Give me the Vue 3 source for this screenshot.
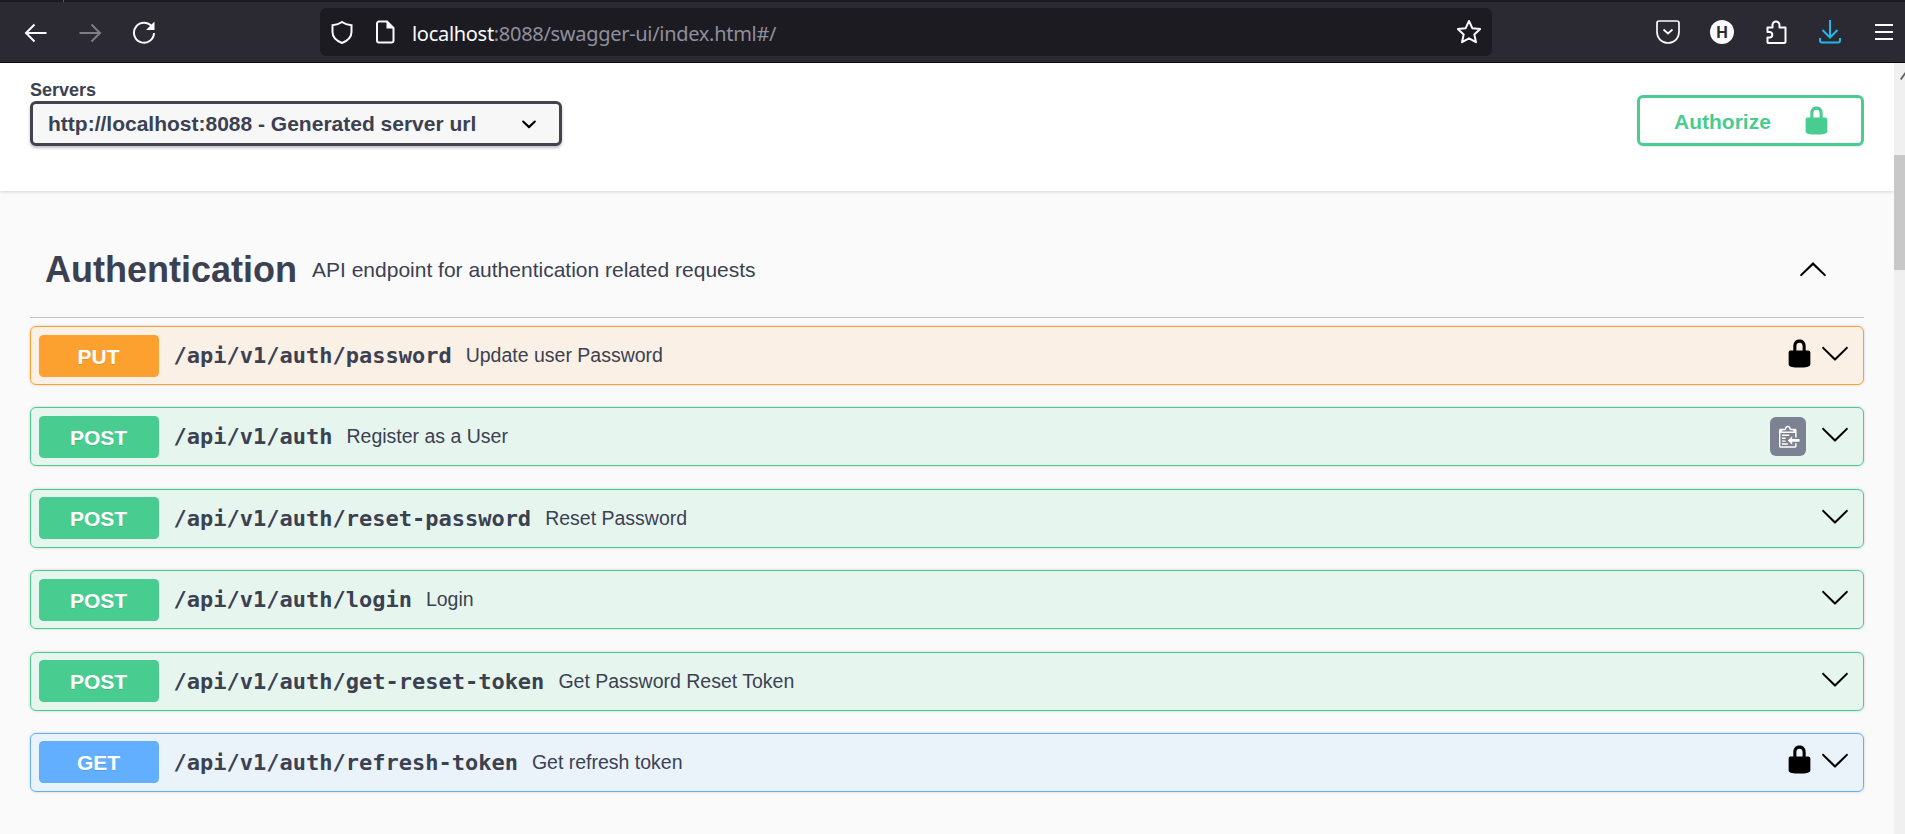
<script setup>
const lock = "M15.8 8H14V5.6C14 2.703 12.665 1 10 1 7.334 1 6 2.703 6 5.6V8H4c-.553 0-1 .646-1 1.199V17c0 .549.428 1.139.951 1.307l1.197.387C5.672 18.861 6.55 19 7.1 19h5.8c.549 0 1.428-.139 1.951-.307l1.196-.387c.524-.167.953-.757.953-1.306V9.199C17 8.646 16.352 8 15.8 8zM12 8H8V5.199C8 3.754 8.797 3 10 3s2 .754 2 2.199V8z"
const arrow = "M17.418 6.109c.272-.268.709-.268.979 0s.271.701 0 .969l-7.908 7.83c-.27.268-.707.268-.979 0l-7.908-7.83c-.27-.268-.27-.701 0-.969.271-.268.709-.268.979 0L10 13.25l7.418-7.141z"
const rows = [
  { method: 'PUT', path: '/api/v1/auth/password', desc: 'Update user Password', extra: 'lock' },
  { method: 'POST', path: '/api/v1/auth', desc: 'Register as a User', extra: 'copy' },
  { method: 'POST', path: '/api/v1/auth/reset-password', desc: 'Reset Password' },
  { method: 'POST', path: '/api/v1/auth/login', desc: 'Login' },
  { method: 'POST', path: '/api/v1/auth/get-reset-token', desc: 'Get Password Reset Token' },
  { method: 'GET', path: '/api/v1/auth/refresh-token', desc: 'Get refresh token', extra: 'lock' }
]
</script>

<template>
  <div class="window">
    <div class="tabstrip"><i class="tabsep"></i></div>
    <header class="toolbar">
      <div class="nav">
        <svg class="ico" viewBox="0 0 24 24"><path d="M22.5 13H2.5M10.5 4.5L2 13l8.500 8.500" /></svg>
        <svg class="ico dim" viewBox="0 0 24 24"><path d="M1.500 13H21.500M13.500 4.500L22 13l-8.500 8.500" /></svg>
        <svg class="ico" viewBox="0 0 24 24"><path d="M20.500 7.500A10 10 0 1 0 22 13" /><path class="solid" d="M22.500 1.500v8.500h-8.500z" /></svg>
      </div>
      <div class="urlbar">
        <svg class="ico shield" viewBox="0 0 24 24"><path d="M12 2C9 4.200 6 4.800 2.500 5.200V12c0 5 4 8.800 9.500 11 5.500-2.200 9.500-6 9.500-11V5.200C18 4.800 15 4.200 12 2z" /></svg>
        <svg class="ico page" viewBox="0 0 24 24"><path d="M4 3.500A2 2 0 0 1 6 1.500h8l6.500 6.500v12.500a2 2 0 0 1-2 2H6a2 2 0 0 1-2-2z" /><path class="solid" d="M13.500 1.500l7 7h-7z" /></svg>
        <div class="url">localhost<span>:8088/swagger-ui/index.html#/</span></div>
        <svg class="ico star" viewBox="0 0 24 24"><path stroke-linejoin="round" d="M12 1l3.300 7.200 7.900.9-5.900 5.300 1.700 7.800L12 18.300l-7 3.900 1.700-7.800L.8 9.100l7.900-.9z" /></svg>
      </div>
      <div class="tools">
        <svg class="ico pocket" viewBox="0 0 24 24"><path d="M3 0h18a2 2 0 0 1 2 2v9a11 11 0 0 1-22 0V2a2 2 0 0 1 2-2z" transform="translate(0 1)" /><path d="M7.500 9.500L12 13.500l4.500-4" /></svg>
        <svg class="badge-h" viewBox="0 0 24 24"><circle cx="12" cy="12" r="12" /><text x="12" y="17.500" text-anchor="middle">H</text></svg>
        <svg class="ico" viewBox="0 0 24 24"><path stroke-linejoin="round" d="M4 23h16a1.500 1.500 0 0 0 1.500-1.500V7.500H15.500V5a3.500 3.500 0 0 0-7 0v2.500H3.500V12H6a2.800 2.800 0 0 1 0 5.500H3.500V22.500z" /></svg>
        <svg class="ico cyan" viewBox="0 0 24 24"><path d="M12 0v16.500M4.500 10L12 17.500 19.500 10" /><path d="M2 18v2.500a2 2 0 0 0 2 2h16a2 2 0 0 0 2-2V18" /></svg>
        <svg class="ico" viewBox="0 0 24 24"><path d="M3 5h18M3 12h18M3 19h18" /></svg>
      </div>
    </header>

    <div class="viewport">
      <main class="content">
        <section class="schemes">
          <div class="servers">
            <div class="label">Servers</div>
            <div class="select">
              <span>http://localhost:8088 - Generated server url</span>
              <svg viewBox="0 0 20 20"><path d="M13.418 7.859a.695.695 0 0 1 .978 0 .68.68 0 0 1 0 .969l-3.908 3.830a.697.697 0 0 1-.979 0l-3.908-3.830a.68.68 0 0 1 0-.969.695.695 0 0 1 .978 0L10 11l3.418-3.141z" /></svg>
            </div>
          </div>
          <button class="authorize">
            <span>Authorize</span>
            <svg viewBox="0 0 20 20"><path :d="lock" /></svg>
          </button>
        </section>

        <section class="api">
          <div class="tag">
            <h3>Authentication</h3>
            <p>API endpoint for authentication related requests</p>
            <svg class="chev up" viewBox="0 0 20 20"><path :d="arrow" /></svg>
          </div>
          <div v-for="row in rows" :key="row.path" class="op" :class="row.method.toLowerCase()">
            <span class="method">{{ row.method }}</span>
            <span class="path">{{ row.path }}</span>
            <span class="desc">{{ row.desc }}</span>
            <svg v-if="row.extra === 'lock'" class="oplock" viewBox="0 0 20 20"><path :d="lock" /></svg>
            <span v-if="row.extra === 'copy'" class="copy">
              <svg viewBox="0 0 15 16"><path d="M2 13h4v1H2v-1zm5-6H2v1h5V7zm2 3V8l-3 3 3 3v-2h5v-2H9zM4.500 9H2v1h2.500V9zM2 12h2.500v-1H2v1zm9 1h1v2c-.02.28-.11.52-.3.7-.19.18-.42.28-.7.3H1c-.55 0-1-.45-1-1V4c0-.55.45-1 1-1h3c0-1.110.89-2 2-2 1.110 0 2 .89 2 2h3c.55 0 1 .45 1 1v5h-1V6H1v9h10v-2zM2 5h8c0-.55-.45-1-1-1H8c-.55 0-1-.45-1-1s-.45-1-1-1-1 .45-1 1-.45 1-1 1H3c-.55 0-1 .45-1 1z" /></svg>
            </span>
            <svg class="chev" viewBox="0 0 20 20"><path :d="arrow" /></svg>
          </div>
        </section>
      </main>
      <aside class="scrollbar">
        <svg class="scrollarrow" viewBox="0 0 5 8"><path d="M0 7L5 0v3L1.500 8z" /></svg>
        <div class="thumb"></div>
      </aside>
    </div>
  </div>
</template>

<style>
html, body { margin: 0; overflow: hidden; background: #fafafa; }
</style>

<style scoped>
.window { width: 1905px; height: 834px; display: flex; flex-direction: column; overflow: hidden; font-family: "Liberation Sans", Arial, sans-serif; color: #3b4151; }
.tabstrip { height: 2px; background: #1c1b22; flex: none; }
.tabsep { display: block; width: 1px; height: 2px; margin-left: 63px; background: #5b5b66; }
.toolbar { height: 60px; flex: none; background: #2b2a33; border-bottom: 1px solid #0c0c0d; display: flex; align-items: center; padding-left: 24px; }
.ico { width: 24px; height: 24px; flex: none; fill: none; stroke: #fbfbfe; stroke-width: 2; }
.ico .solid { fill: #fbfbfe; stroke: none; }
.dim { opacity: .4; }
.cyan { stroke: #1fb8e8; }
.pocket { stroke-width: 1.700; }
.nav { display: flex; gap: 30px; }
.urlbar { margin-left: 164px; width: 1172px; height: 48px; box-sizing: border-box; background: #1c1b22; border-radius: 6px; display: flex; align-items: center; padding-left: 10px; padding-right: 11px; }
.page { margin-left: 19px; }
.url { margin-left: 15px; padding-top: 2px; flex: 1; font-family: "Noto Sans", "Open Sans", sans-serif; font-size: 20px; color: #fbfbfe; white-space: nowrap; letter-spacing: -0.3px; }
.url span { color: #8f8f9d; }
.tools { margin-left: 164px; display: flex; gap: 30px; align-items: center; }
.badge-h { width: 24px; height: 24px; fill: #fbfbfe; }
.badge-h text { fill: #2b2a33; font-family: "Liberation Sans", sans-serif; font-weight: 700; font-size: 16px; }
.viewport { flex: 1; display: flex; min-height: 0; }
.content { flex: 1; min-width: 0; background: #fafafa; }
.schemes { height: 128px; box-sizing: border-box; background: #fff; box-shadow: 0 1px 3px 0 rgba(0, 0, 0, .15); padding: 17px 30px 0; display: flex; justify-content: space-between; align-items: flex-start; }
.label { font-size: 18px; font-weight: 700; line-height: 21px; }
.select { width: 532px; height: 45px; box-sizing: border-box; border: 3px solid #41444e; border-radius: 6px; background: #f7f7f7; box-shadow: 0 2px 3px 0 rgba(0, 0, 0, .25); display: flex; align-items: center; justify-content: space-between; padding: 0 15px; font-size: 21px; font-weight: 700; white-space: nowrap; }
.select svg { width: 30px; height: 30px; flex: none; }
.authorize { margin-top: 15px; width: 227px; height: 51px; box-sizing: border-box; border: 3px solid #49cc90; border-radius: 6px; background: transparent; box-shadow: 0 1px 2px rgba(0, 0, 0, .1); color: #49cc90; font: 700 21px "Liberation Sans", Arial, sans-serif; display: flex; align-items: center; padding: 0 0 0 34px; }
.authorize span { width: 127px; text-align: left; padding-top: 2px; }
.authorize svg { width: 31px; height: 31px; fill: #49cc90; flex: none; }
.api { padding: 0 30px; }
.tag { margin-top: 31px; height: 95px; display: flex; align-items: center; padding: 0 36px 0 15px; border-bottom: 1px solid rgba(59, 65, 81, .3); margin-bottom: 8px; }
.tag h3 { margin: 0; font-size: 36px; font-weight: 700; }
.tag p { margin: 0 0 0 15px; flex: 1; font-size: 21px; }
.chev { width: 30px; height: 30px; flex: none; margin-top: -5px; }
.chev.up { transform: rotate(180deg); margin-top: 0; }
.op { height: 59px; box-sizing: border-box; margin-bottom: 22.400px; border: 1.500px solid; border-radius: 6px; box-shadow: 0 0 3px rgba(0, 0, 0, .19); display: flex; align-items: center; padding: 0 13px 0 7.500px; }
.put { background: rgba(252, 161, 48, .1); border-color: #fca130; }
.post { background: rgba(73, 204, 144, .1); border-color: #49cc90; }
.get { background: rgba(97, 175, 254, .1); border-color: #61affe; }
.method { width: 120px; height: 42px; flex: none; border-radius: 4.500px; color: #fff; font-size: 21px; font-weight: 700; line-height: 43px; text-align: center; text-shadow: 0 1px 0 rgba(0, 0, 0, .1); }
.put .method { background: #fca130; }
.post .method { background: #49cc90; }
.get .method { background: #61affe; }
.path { margin-left: 15px; font-family: "DejaVu Sans Mono", monospace; font-size: 22px; font-weight: 700; white-space: nowrap; }
.desc { margin-left: 14px; flex: 1; font-size: 19.500px; white-space: nowrap; }
.oplock { width: 31px; height: 31px; flex: none; margin: -5px 5.500px 0 0; }
.copy { width: 36px; height: 39px; box-sizing: border-box; padding-left: 3px; flex: none; margin: -1px 14px 0 0; background: #7d8293; border-radius: 6px; display: flex; align-items: center; justify-content: center; }
.copy svg { width: 22px; height: 24px; fill: #fff; }
.scrollbar { width: 11px; flex: none; background: #f0f0f0; display: flex; flex-direction: column; align-items: flex-end; }
.scrollarrow { width: 5px; height: 8px; margin-top: 9px; fill: #606060; }
.thumb { width: 100%; height: 115px; margin-top: 75px; background: #c8c8c8; }
</style>
